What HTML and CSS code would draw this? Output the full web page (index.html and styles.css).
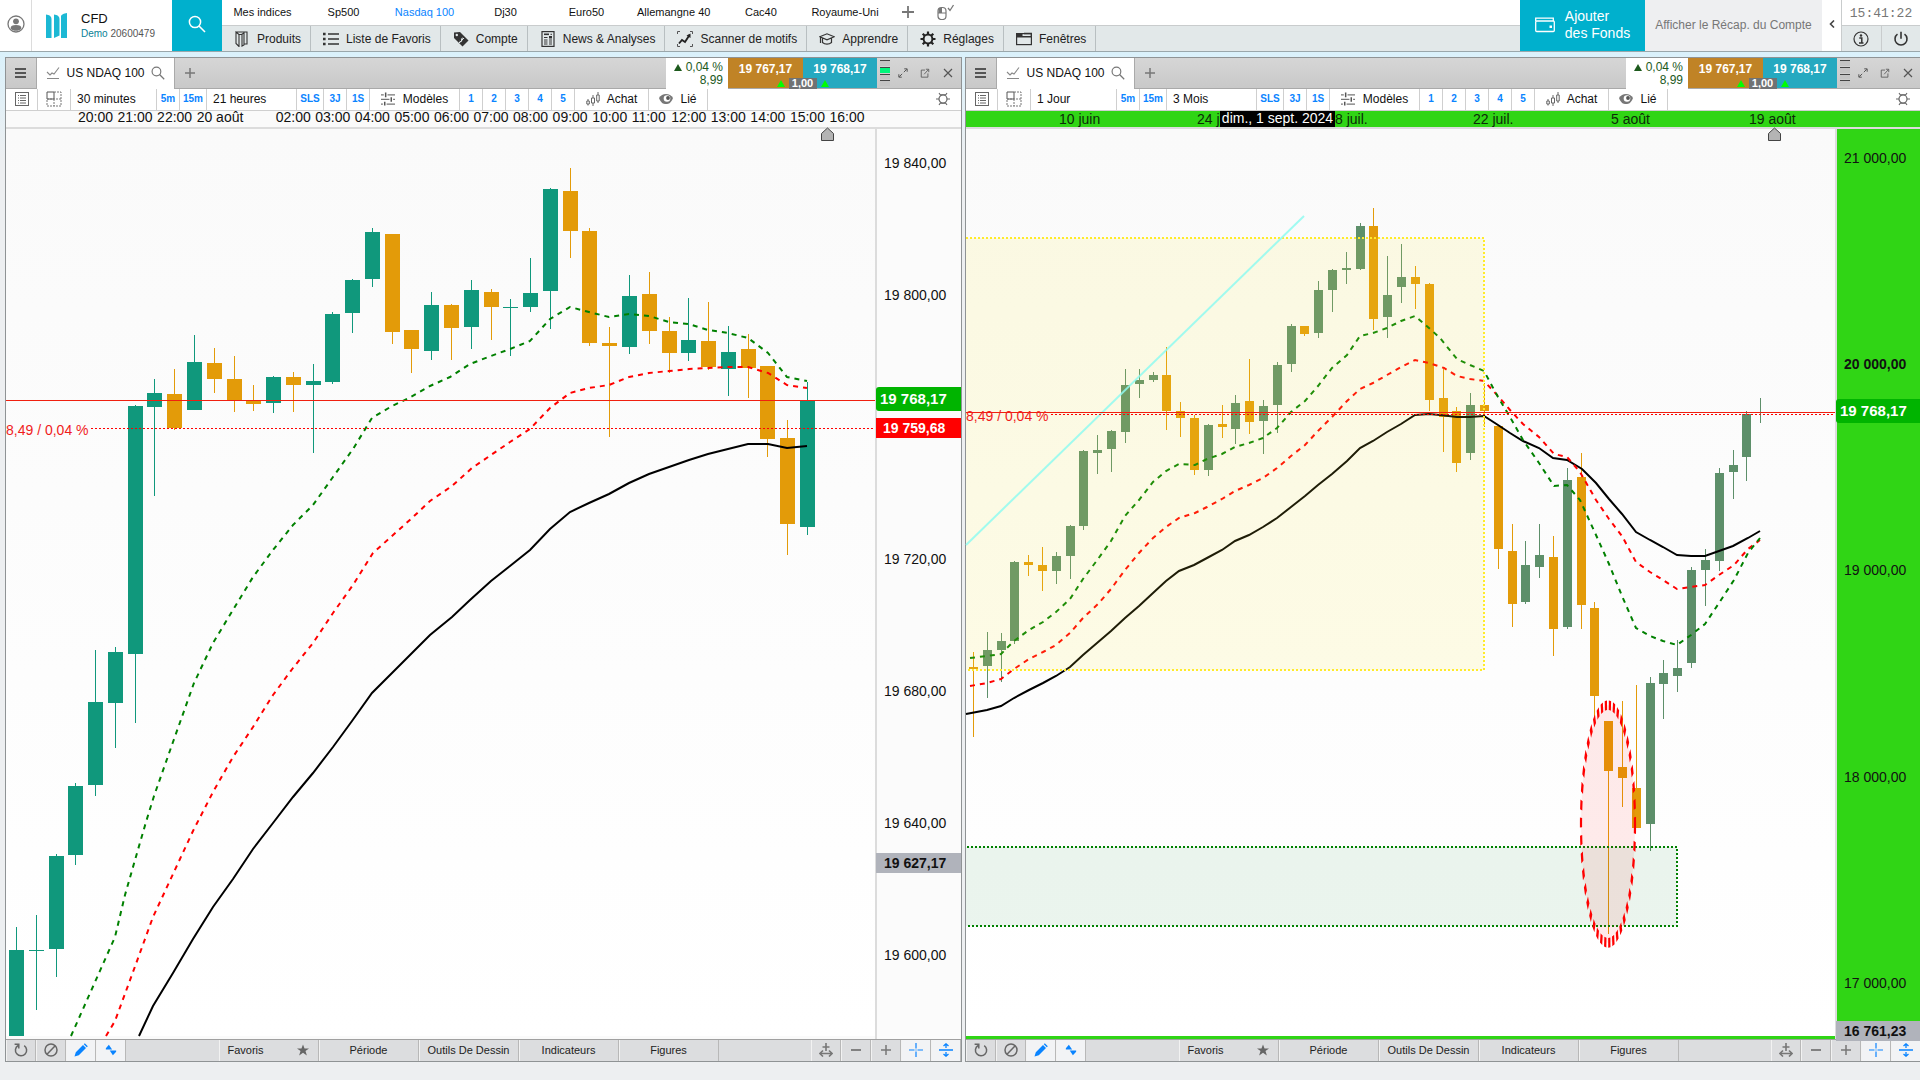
FILE: index.html
```html
<!DOCTYPE html>
<html lang="fr">
<head>
<meta charset="utf-8">
<meta name="viewport" content="width=device-width, initial-scale=1">
<title>CFD - US NDAQ 100</title>
<link rel="stylesheet" href="styles.css">
<script src="chart.js" defer></script>
</head>
<body>
<svg class="sprite" aria-hidden="true">
  <symbol id="i-user" viewBox="0 0 18 18"><circle cx="9" cy="9" r="8" fill="none" stroke="#777" stroke-width="1.3"/><circle cx="9" cy="6.3" r="2.9" fill="#777"/><path d="M3.6 13.4c0-2.4 1.8-3.4 5.4-3.4s5.4 1 5.4 3.4c-1.4 1.8-3.4 2.4-5.4 2.4s-4-.6-5.4-2.4z" fill="#777"/></symbol>
  <symbol id="i-logo" viewBox="0 0 21 25"><path d="M0 1.5C3 2 5.500 3 5.500 6v19H0zM8 1.500c3 .5 5.500 1.500 5.500 4.500v16.500L8 25zM15 3.500c0-2 3-3 6-3.500v25h-6z" fill="#1cb8d4"/></symbol>
  <symbol id="i-search" viewBox="0 0 18 18"><circle cx="7" cy="7" r="5.600" fill="none" stroke="currentColor" stroke-width="1.500"/><path d="M11 11l6 6" stroke="currentColor" stroke-width="1.600"/></symbol>
  <symbol id="i-plus" viewBox="0 0 12 12"><path d="M6 0v12M0 6h12" stroke="currentColor" stroke-width="1.800"/></symbol>
  <symbol id="i-mouse" viewBox="0 0 18 16"><rect x="1" y="3.500" width="8" height="12" rx="3.500" fill="none" stroke="#777" stroke-width="1.200"/><path d="M2 4h3v5H1.500V5z" fill="#777"/><path d="M1 9h8" stroke="#777"/><path d="M11 4l2 2.500L16.500 1" fill="none" stroke="#777" stroke-width="1.300"/></symbol>
  <symbol id="i-produits" viewBox="0 0 16 16"><path d="M2 1h11v12h-3M5 15.500V3.500L2 1v11.500l3 3zM5 3.500h2.500L10 2v12l-2 1V3.500" fill="none" stroke="#333" stroke-width="1.100"/></symbol>
  <symbol id="i-liste" viewBox="0 0 16 16"><path d="M5 3h11M5 8h11M5 13h11" stroke="#333" stroke-width="1.600"/><path d="M0 3h2.600M0 8h2.600M0 13h2.600" stroke="#333" stroke-width="2.600"/></symbol>
  <symbol id="i-compte" viewBox="0 0 16 16"><path d="M1 1.500L7 1l8.500 8.500-6 6L1 7z" fill="#333"/><circle cx="3.800" cy="4" r="1.200" fill="#e2e8e9"/><path d="M10.500 7.500c-1.200-1-2.700.2-1.900 1.500s-.8 2.500-2 1.300M11 7l-5 5" fill="none" stroke="#e2e8e9" stroke-width="1"/></symbol>
  <symbol id="i-news" viewBox="0 0 16 16"><rect x="2" y=".600" width="12" height="14.800" fill="none" stroke="#333" stroke-width="1.200"/><path d="M4 3.300h5" stroke="#333" stroke-width="1.600"/><path d="M4 6.500h3.500M4 9h3.500M4 11h3.500M4 13h3.500M9 9h3M9 11h3M9 13h3M10.500 3.300H12" stroke="#333"/><path d="M9 5h3v2.500H9z" fill="#333"/></symbol>
  <symbol id="i-scan" viewBox="0 0 16 16"><path d="M.5 3V.5H3M13 .5h2.500V3M.5 13v2.500H3M13 15.500h2.500V13" fill="none" stroke="#555"/><path d="M2 12.500l3-3.500 3 2 4.500-7" fill="none" stroke="#222" stroke-width="1.900"/><path d="M9.500 4.500L13.500 2.500v4.500z" fill="#222"/></symbol>
  <symbol id="i-cap" viewBox="0 0 16 16"><path d="M.8 5.800L8 2.800l7.200 3L8 8.800zM3.500 7.300v4.200c2.500 2.200 6.500 2.200 9 0V7.300M1.500 6.500V12" fill="none" stroke="#333" stroke-width="1.200"/></symbol>
  <symbol id="i-gear" viewBox="0 0 16 16"><circle cx="8" cy="8" r="4.400" fill="none" stroke="currentColor" stroke-width="2"/><path d="M8 .5v3M8 12.500v3M.5 8h3M12.500 8h3M2.700 2.700l2.100 2.100M11.200 11.200l2.100 2.100M2.700 13.300l2.100-2.100M11.200 4.800l2.100-2.100" stroke="currentColor" stroke-width="2.200"/></symbol>
  <symbol id="i-win" viewBox="0 0 16 16"><rect x=".6" y="2.600" width="14.800" height="11" fill="none" stroke="#333" stroke-width="1.200"/><path d="M0 2h6.500v3H16v1.500H0z" fill="#333"/><path d="M8 2.500h7.500V5" fill="none" stroke="#333" stroke-width="1.500"/></symbol>
  <symbol id="i-card" viewBox="0 0 20 16"><path d="M.7 4.500V1.700h17.600v2.800" fill="none" stroke="#fff" stroke-width="1.300"/><rect x=".7" y="4.500" width="18.600" height="10.500" rx="1" fill="none" stroke="#fff" stroke-width="1.300"/><path d="M14.500 9h2.500v2.500h-2.500z" fill="#fff"/></symbol>
  <symbol id="i-chev" viewBox="0 0 6 8"><path d="M5 .5L1.500 4 5 7.500" fill="none" stroke="#444" stroke-width="1.600"/></symbol>
  <symbol id="i-info" viewBox="0 0 16 16"><circle cx="8" cy="8" r="7" fill="none" stroke="#333" stroke-width="1.200"/><circle cx="8" cy="4.500" r="1.200" fill="#333"/><path d="M6.300 7H8.800v5M6 12h4.500" fill="none" stroke="#333" stroke-width="1.500"/></symbol>
  <symbol id="i-power" viewBox="0 0 16 16"><path d="M4.500 3.200a6 6 0 1 0 7 0M8 .8v7" fill="none" stroke="#333" stroke-width="1.600"/></symbol>
  <symbol id="i-menu" viewBox="0 0 12 12"><path d="M0 2h11M0 6h11M0 10h11" stroke="#555" stroke-width="2"/></symbol>
  <symbol id="i-line" viewBox="0 0 14 14"><path d="M1 6l3 3 2-2 2 1 5-6.500M1 12.500h12" fill="none" stroke="#888" stroke-width="1.100"/></symbol>
  <symbol id="i-expand" viewBox="0 0 12 12"><path d="M7 5l3.500-3.500M7.500 1h3.500v3.500M5 7L1.500 10.500M1 7.500V11h3.500" fill="none" stroke="#555" stroke-width="1.200"/></symbol>
  <symbol id="i-pop" viewBox="0 0 12 12"><path d="M6 2.500H1.500v8.500h8V6.500M5 7.500L10 2M7 1.500h3.500V5" fill="none" stroke="#555"/></symbol>
  <symbol id="i-close" viewBox="0 0 12 12"><path d="M2 2l8 8M10 2l-8 8" stroke="#555" stroke-width="1.200"/></symbol>
  <symbol id="i-list2" viewBox="0 0 14 14"><rect x=".5" y=".5" width="13" height="13" fill="none" stroke="#666"/><path d="M5 3.500h6M5 6h6M5 8.500h6M5 11h6M3 3.500h1M3 6h1M3 8.500h1M3 11h1" stroke="#666"/></symbol>
  <symbol id="i-grid" viewBox="0 0 16 15"><path d="M1 .5h7v7H1z" fill="none" stroke="#555"/><path d="M8 .5h7v14H1v-7h14M8 7.500v7" fill="none" stroke="#777" stroke-dasharray="2 1"/></symbol>
  <symbol id="i-sliders" viewBox="0 0 15 14"><path d="M0 2.500h15M0 7.500h15M0 12.500h15" stroke="#777" stroke-width="1.300"/><path d="M5 0v5M11 5v5M4 10v4" stroke="#fff" stroke-width="4"/><path d="M5 0v5M11 5v5M4 10v4" stroke="#555" stroke-width="1.600"/></symbol>
  <symbol id="i-candles" viewBox="0 0 14 14"><path d="M.8 9h2.500v3H.8zM5.500 6h3v5h-3zM10.700 3h2.500v6h-2.500zM7 3v3M7 11v3M12 0v3M12 9v2M2 7v2M2 12v1.500" fill="none" stroke="#666"/></symbol>
  <symbol id="i-eye" viewBox="0 0 14 12"><path d="M0 5C3-.5 11-.5 14 5c-2 5-4 6-7 6S2 10 0 5z" fill="#777"/><circle cx="8" cy="5.500" r="3.300" fill="#fff"/><circle cx="9" cy="5" r="1.900" fill="#555"/></symbol>
  <symbol id="i-cog" viewBox="0 0 14 14"><circle cx="7" cy="7" r="4" fill="none" stroke="#666" stroke-width="1.200"/><path d="M3 1l1.700 2.500M11 1L9.300 3.500M3 13l1.700-2.500M11 13l-1.700-2.500M0 7h3M11 7h3M4.500 2.800h5M4.500 11.200h5" stroke="#666" stroke-width="1.100"/></symbol>
  <symbol id="i-reload" viewBox="0 0 14 14"><path d="M10.200 2.600A5.600 5.600 0 1 1 4 2.500M.6 1.300h4.200v4.200" fill="none" stroke="#666" stroke-width="1.500"/></symbol>
  <symbol id="i-ban" viewBox="0 0 14 14"><path d="M3 11.300l8.200-8.600" stroke="#666" stroke-width="1.500"/><circle cx="7" cy="7" r="6" fill="none" stroke="#666" stroke-width="1.500"/></symbol>
  <symbol id="i-pen" viewBox="0 0 14 14"><path d="M.5 13.500l1.300-4.300L9 2l3 3-7.200 7.200zM9.800 1.200l1-1 3 3-1 1z" fill="#0a84ff"/></symbol>
  <symbol id="i-updown" viewBox="0 0 12 14"><path d="M3.500 1L7.300 6.500H0V5zM4.500 7.500H12V9l-3.800 4z" fill="#0a84ff"/></symbol>
  <symbol id="i-star" viewBox="0 0 14 13"><path d="M7 0l1.800 4.700H14L9.900 7.800 11.500 13 7 9.800 2.500 13l1.600-5.200L0 4.700h5.200z" fill="#666"/></symbol>
  <symbol id="i-hzoom" viewBox="0 0 14 14"><path d="M7 0v8M3.500 4h7M1 10.500h12" fill="none" stroke="#777" stroke-width="1.600"/><path d="M4 7.500l-3 3 3 3M10 7.500l3 3-3 3" fill="none" stroke="#777" stroke-width="1.600"/></symbol>
  <symbol id="i-minus" viewBox="0 0 10 10"><path d="M0 5h10" stroke="#777" stroke-width="1.800"/></symbol>
  <symbol id="i-cross" viewBox="0 0 14 14"><path d="M7 0v5.500M7 8.500V14M0 7h5.500M8.500 7H14M6.500 7h1" stroke="#0a84ff" stroke-width="1.200"/></symbol>
  <symbol id="i-vsplit" viewBox="0 0 14 14"><path d="M0 7h14M7 1v4M7 9v4M4.500 3L7 .8 9.500 3M4.500 11L7 13.200 9.500 11" fill="none" stroke="#0a84ff" stroke-width="1.300"/></symbol>
</svg>

<header class="top">
  <button class="user" aria-label="Profil"><svg class="s18"><use href="#i-user"/></svg></button>
  <div class="brand">
    <svg class="logo"><use href="#i-logo"/></svg>
    <div><div class="brand-name">CFD</div><div class="brand-id"><b>Demo</b> 20600479</div></div>
  </div>
  <button class="find" aria-label="Rechercher"><svg class="s18"><use href="#i-search"/></svg></button>
  <div class="navs">
    <nav class="markets">
      <button>Mes indices</button><button>Sp500</button><button class="on">Nasdaq 100</button><button>Dj30</button><button>Euro50</button><button>Allemangne 40</button><button>Cac40</button><button>Royaume-Uni</button>
      <button class="tool" aria-label="Ajouter"><svg class="s12"><use href="#i-plus"/></svg></button>
      <button class="tool" aria-label="Souris"><svg class="mouse"><use href="#i-mouse"/></svg></button>
    </nav>
    <nav class="menu">
      <button><svg class="s16"><use href="#i-produits"/></svg>Produits</button>
      <button><svg class="s16"><use href="#i-liste"/></svg>Liste de Favoris</button>
      <button><svg class="s16"><use href="#i-compte"/></svg>Compte</button>
      <button><svg class="s16"><use href="#i-news"/></svg>News &amp; Analyses</button>
      <button><svg class="s16"><use href="#i-scan"/></svg>Scanner de motifs</button>
      <button><svg class="s16"><use href="#i-cap"/></svg>Apprendre</button>
      <button><svg class="s16"><use href="#i-gear"/></svg>Réglages</button>
      <button><svg class="s16"><use href="#i-win"/></svg>Fenêtres</button>
    </nav>
  </div>
  <button class="funds"><svg class="card"><use href="#i-card"/></svg><span>Ajouter<br>des Fonds</span></button>
  <button class="recap">Afficher le Récap. du Compte</button>
  <button class="chev" aria-label="Réduire"><svg class="chev-i"><use href="#i-chev"/></svg></button>
  <div class="status">
    <time class="clock">15:41:22</time>
    <div class="status-row">
      <button aria-label="Info"><svg class="s16"><use href="#i-info"/></svg></button>
      <button aria-label="Quitter"><svg class="s16"><use href="#i-power"/></svg></button>
    </div>
  </div>
</header>

<main class="desk">
  <section class="panel">
    <div class="tabbar">
      <button class="burger" aria-label="Menu"><svg class="s12"><use href="#i-menu"/></svg></button>
      <button class="tab"><svg class="s14"><use href="#i-line"/></svg>US NDAQ 100<svg class="s14 grey"><use href="#i-search"/></svg></button>
      <button class="add" aria-label="Nouvel onglet"><svg class="s10"><use href="#i-plus"/></svg></button>
      <div class="change"><span><i class="tri"></i>0,04 %</span><span>8,99</span></div>
      <div class="quote">
        <button class="sell">19 767,17</button><button class="buy">19 768,17</button>
        <div class="spread"><i class="up"></i><b>1,00</b><i class="up"></i></div>
      </div>
      <div class="gauge"><i></i><i class="lit"></i><i></i><i></i></div>
      <div class="winctl">
        <button aria-label="Agrandir"><svg class="s10"><use href="#i-expand"/></svg></button>
        <button aria-label="Détacher"><svg class="s10"><use href="#i-pop"/></svg></button>
        <button aria-label="Fermer"><svg class="s12"><use href="#i-close"/></svg></button>
      </div>
    </div>
    <div class="tools">
      <button class="w-ic" aria-label="Liste"><svg class="s14"><use href="#i-list2"/></svg></button>
      <button class="w-grid" aria-label="Grille"><svg class="s16"><use href="#i-grid"/></svg></button>
      <button class="w-per">30 minutes</button>
      <button class="q">5m</button><button class="q q-l">15m</button>
      <button class="w-span">21 heures</button>
      <button class="q q-l">SLS</button><button class="q">3J</button><button class="q">1S</button>
      <button class="w-mod"><svg class="s14"><use href="#i-sliders"/></svg>Modèles</button>
      <button class="q">1</button><button class="q">2</button><button class="q">3</button><button class="q">4</button><button class="q">5</button>
      <button class="w-buy"><svg class="s14"><use href="#i-candles"/></svg>Achat</button>
      <button class="w-link"><svg class="eye"><use href="#i-eye"/></svg>Lié</button>
      <button class="w-cog" aria-label="Options"><svg class="s14"><use href="#i-cog"/></svg></button>
    </div>
    <div class="times hours">
      <span>20:00</span><span>21:00</span><span>22:00</span><span class="day">20 août</span><span>02:00</span><span>03:00</span><span>04:00</span><span>05:00</span><span>06:00</span><span>07:00</span><span>08:00</span><span>09:00</span><span>10:00</span><span>11:00</span><span>12:00</span><span>13:00</span><span>14:00</span><span>15:00</span><span>16:00</span>
    </div>
    <div class="chart">
      <svg class="plot" id="plot-30m" viewBox="6 129 869 907" preserveAspectRatio="none"></svg>
      <div class="axis" id="axis-30m"></div>
      <span class="gap" id="gap-30m">8,49 / 0,04 %</span>
    </div>
    <div class="foot">
      <button class="f-ic" aria-label="Recharger"><svg class="s14"><use href="#i-reload"/></svg></button>
      <button class="f-ic" aria-label="Effacer"><svg class="s14"><use href="#i-ban"/></svg></button>
      <button class="f-ic lit" aria-label="Dessiner"><svg class="s14"><use href="#i-pen"/></svg></button>
      <button class="f-ic lit" aria-label="Ordres"><svg class="s12"><use href="#i-updown"/></svg></button>
      <span class="fill"></span>
      <button class="f-tx fav">Favoris<svg class="s12"><use href="#i-star"/></svg></button>
      <button class="f-tx">Période</button><button class="f-tx">Outils De Dessin</button><button class="f-tx">Indicateurs</button><button class="f-tx">Figures</button>
      <span class="fill"></span>
      <button class="f-ic" aria-label="Ajuster"><svg class="s14"><use href="#i-hzoom"/></svg></button>
      <button class="f-ic" aria-label="Dézoomer"><svg class="s10"><use href="#i-minus"/></svg></button>
      <button class="f-ic grey" aria-label="Zoomer"><svg class="s10"><use href="#i-plus"/></svg></button>
      <button class="f-ic lit" aria-label="Réticule"><svg class="s14"><use href="#i-cross"/></svg></button>
      <button class="f-ic lit" aria-label="Échelle"><svg class="s14"><use href="#i-vsplit"/></svg></button>
    </div>
  </section>

  <section class="panel daily">
    <div class="tabbar">
      <button class="burger" aria-label="Menu"><svg class="s12"><use href="#i-menu"/></svg></button>
      <button class="tab"><svg class="s14"><use href="#i-line"/></svg>US NDAQ 100<svg class="s14 grey"><use href="#i-search"/></svg></button>
      <button class="add" aria-label="Nouvel onglet"><svg class="s10"><use href="#i-plus"/></svg></button>
      <div class="change"><span><i class="tri"></i>0,04 %</span><span>8,99</span></div>
      <div class="quote">
        <button class="sell">19 767,17</button><button class="buy">19 768,17</button>
        <div class="spread"><i class="up"></i><b>1,00</b><i class="up"></i></div>
      </div>
      <div class="gauge"><i></i><i></i><i></i><i></i></div>
      <div class="winctl">
        <button aria-label="Agrandir"><svg class="s10"><use href="#i-expand"/></svg></button>
        <button aria-label="Détacher"><svg class="s10"><use href="#i-pop"/></svg></button>
        <button aria-label="Fermer"><svg class="s12"><use href="#i-close"/></svg></button>
      </div>
    </div>
    <div class="tools">
      <button class="w-ic" aria-label="Liste"><svg class="s14"><use href="#i-list2"/></svg></button>
      <button class="w-grid" aria-label="Grille"><svg class="s16"><use href="#i-grid"/></svg></button>
      <button class="w-per">1 Jour</button>
      <button class="q">5m</button><button class="q q-l">15m</button>
      <button class="w-span">3 Mois</button>
      <button class="q q-l">SLS</button><button class="q">3J</button><button class="q">1S</button>
      <button class="w-mod"><svg class="s14"><use href="#i-sliders"/></svg>Modèles</button>
      <button class="q">1</button><button class="q">2</button><button class="q">3</button><button class="q">4</button><button class="q">5</button>
      <button class="w-buy"><svg class="s14"><use href="#i-candles"/></svg>Achat</button>
      <button class="w-link"><svg class="eye"><use href="#i-eye"/></svg>Lié</button>
      <button class="w-cog" aria-label="Options"><svg class="s14"><use href="#i-cog"/></svg></button>
    </div>
    <div class="times days">
      <span>10 juin</span><span>24 j</span><span>8 juil.</span><span>22 juil.</span><span>5 août</span><span>19 août</span>
      <b class="cursor-date">dim., 1 sept. 2024</b>
    </div>
    <div class="chart">
      <svg class="plot" id="plot-day" viewBox="6 129 869 907" preserveAspectRatio="none"></svg>
      <div class="axis" id="axis-day"></div>
      <span class="gap" id="gap-day">8,49 / 0,04 %</span>
    </div>
    <div class="foot">
      <button class="f-ic" aria-label="Recharger"><svg class="s14"><use href="#i-reload"/></svg></button>
      <button class="f-ic" aria-label="Effacer"><svg class="s14"><use href="#i-ban"/></svg></button>
      <button class="f-ic lit" aria-label="Dessiner"><svg class="s14"><use href="#i-pen"/></svg></button>
      <button class="f-ic lit" aria-label="Ordres"><svg class="s12"><use href="#i-updown"/></svg></button>
      <span class="fill"></span>
      <button class="f-tx fav">Favoris<svg class="s12"><use href="#i-star"/></svg></button>
      <button class="f-tx">Période</button><button class="f-tx">Outils De Dessin</button><button class="f-tx">Indicateurs</button><button class="f-tx">Figures</button>
      <span class="fill"></span>
      <button class="f-ic" aria-label="Ajuster"><svg class="s14"><use href="#i-hzoom"/></svg></button>
      <button class="f-ic" aria-label="Dézoomer"><svg class="s10"><use href="#i-minus"/></svg></button>
      <button class="f-ic grey" aria-label="Zoomer"><svg class="s10"><use href="#i-plus"/></svg></button>
      <button class="f-ic lit" aria-label="Réticule"><svg class="s14"><use href="#i-cross"/></svg></button>
      <button class="f-ic lit" aria-label="Échelle"><svg class="s14"><use href="#i-vsplit"/></svg></button>
    </div>
  </section>
</main>
</body>
</html>
```

FILE: styles.css
```css
* { box-sizing: border-box; }
body {
  margin: 0;
  height: 100vh;
  display: flex;
  flex-direction: column;
  overflow: hidden;
  background: linear-gradient(#daf1fb 52px, #edeff1 160px);
  font-family: "Liberation Sans", Arial, sans-serif;
  font-size: 12px;
  color: #111;
}
button {
  margin: 0;
  padding: 0;
  border: 0;
  background: none;
  font: inherit;
  color: inherit;
  white-space: nowrap;
  display: flex;
  align-items: center;
  justify-content: center;
}
svg { display: block; flex: none; }
.sprite { position: absolute; width: 0; height: 0; }
.s10 { width: 10px; height: 10px; }
.s12 { width: 12px; height: 12px; }
.s14 { width: 14px; height: 14px; }
.s16 { width: 16px; height: 16px; }
.s18 { width: 18px; height: 18px; }
.grey { color: #777; }

/* header */
.top { flex: none; display: flex; height: 52px; background: #fff; border-bottom: 1px solid #9aa7ab; }
.user { width: 32px; padding-bottom: 3px; border-right: 1px solid #dcdcdc; }
.brand { width: 140px; display: flex; align-items: center; gap: 14px; padding-left: 14px; }
.logo { width: 21px; height: 25px; }
.brand-name { font-size: 13px; line-height: 16px; }
.brand-id { font-size: 10px; line-height: 14px; color: #555; }
.brand-id b { font-weight: normal; color: #0a7f96; }
.find { width: 50px; background: #00b0cd; color: #fff; padding-bottom: 4px; }
.navs { flex: 1; min-width: 0; display: flex; flex-direction: column; }
.markets { display: flex; height: 26px; border-bottom: 1px solid #c9cccd; font-size: 11px; }
.markets button { min-width: 81px; padding: 0 10px 2px; }
.markets .on { color: #0a84ff; }
.markets .tool { min-width: 38px; color: #777; }
.mouse { width: 18px; height: 16px; }
.menu { flex: 1; display: flex; background: #e2e8e9; color: #222; }
.menu button { gap: 7px; padding: 0 9px 0 12px; border-right: 1px solid #b8bfc1; }
.funds { width: 125px; padding-bottom: 2px; background: #00b0cd; color: #fff; font-size: 14px; line-height: 17px; text-align: left; gap: 10px; }
.card { width: 20px; height: 17px; }
.recap { width: 177px; padding-bottom: 2px; background: #eeeff1; color: #777; }
.chev { width: 19px; padding-bottom: 4px; }
.chev-i { width: 6px; height: 8px; }
.status { width: 79px; border-left: 1px solid #c9cccd; display: flex; flex-direction: column; }
.clock { height: 26px; line-height: 27px; text-align: center; border-bottom: 1px solid #c9cccd; font-family: "Liberation Mono", monospace; font-size: 13px; color: #777; }
.status-row { flex: 1; display: flex; background: #e2e8e9; }
.status-row button { flex: 1; }
.status-row button + button { border-left: 1px solid #c9cccd; }

/* panels; the right one runs slightly past the window edge */
.desk {
  flex: 1;
  min-height: 0;
  display: grid;
  grid-template-columns: 1fr 1fr;
  gap: 3px;
  padding: 5px 0 18px 5px;
  margin-right: -2px;
}
.panel { min-width: 0; min-height: 0; display: flex; flex-direction: column; border: 1px solid #8f9395; background: #fff; }
.tabbar { flex: none; display: flex; height: 31px; background: linear-gradient(#d6d6d6, #c8c8c8); }
.tabbar > * { border-bottom: 1px solid #a9a9a9; }
.burger { width: 31px; border-right: 1px solid #aaa; }
.tabbar .tab { width: 137px; gap: 6px; background: #fff; border-bottom-color: #fff; }
.add { flex: 1; justify-content: flex-start; padding-left: 10px; border-left: 1px solid #aaa; color: #777; }
.change { width: 62px; padding: 3px 5px 0 0; background: #fff; color: #1d5a1d; display: flex; flex-direction: column; align-items: flex-end; line-height: 13px; }
.tabbar .change { border-bottom-color: #fff; }
.change span { display: flex; align-items: center; gap: 4px; }
.tri, .up { border: solid transparent; border-width: 0 4px 7px; border-bottom-color: #1d5a1d; }
.up { border-bottom-color: #0f0; }
.quote { position: relative; display: grid; grid-template-columns: 75px 74px; color: #fff; font-weight: bold; }
.quote button { padding-bottom: 8px; }
.sell { background: #c08326; }
.buy { background: #25a9c0; }
.spread { position: absolute; left: 0; right: 0; bottom: -1px; display: flex; justify-content: center; align-items: center; gap: 4px; }
.spread b { width: 28px; height: 11px; background: #6f7274; font-size: 11px; line-height: 11px; text-align: center; }
.gauge { width: 14px; padding: 2px 1px 2px 3px; display: flex; flex-direction: column; gap: 1px; }
.gauge i { flex: 1; border-top: 1px solid #444; background: #c4c4c4; }
.gauge .lit { background: #00f57a; }
.winctl { width: 70px; display: flex; align-items: center; gap: 12px; padding-left: 7px; }

.tools { flex: none; display: flex; height: 22px; border-bottom: 1px solid #cfcfcf; background: #fff; }
.tools button { padding-bottom: 2px; border-right: 1px solid #cfcfcf; }
.w-ic { width: 32px; }
.w-grid { width: 33px; }
.tools .w-per, .tools .w-span { justify-content: flex-start; padding-left: 6px; }
.w-per { width: 86px; }
.w-span { width: 90px; }
.q { width: 23px; font-size: 10px; font-weight: bold; color: #0a84ff; }
.q-l { width: 27px; }
.w-mod { width: 90px; gap: 8px; }
.w-buy { width: 74px; gap: 7px; }
.w-link { width: 59px; gap: 7px; }
.eye { width: 14px; height: 12px; }
.tools .w-cog { margin-left: auto; width: 36px; border-right: 0; }

.times { flex: none; display: grid; height: 18px; border-bottom: 2px solid #dcdcdc; background: #fafafa; font-size: 14px; line-height: 13px; white-space: nowrap; }
.hours { grid-template-columns: repeat(20, 1fr); padding: 0 92px 0 72px; }
.hours .day { grid-column: span 2; }
.days { position: relative; grid-template-columns: repeat(6, 1fr); padding: 0 34px 0 93px; background: #30d515; line-height: 17px; color: #0c2a08; }
.cursor-date { position: absolute; left: 254px; top: 0; width: 115px; height: 16px; line-height: 15px; font-weight: normal; background: #000; color: #fff; text-align: center; }

.chart { position: relative; flex: 1; min-height: 0; display: grid; grid-template-columns: minmax(0, 1fr) 86px; grid-template-rows: minmax(0, 1fr); background: linear-gradient(#fafafa, #fff); }
.plot { width: 100%; height: 100%; min-height: 0; overflow: visible; border-bottom: 3px solid #fafafa; }
.daily .plot { border-bottom-color: #30d515; }
.axis { position: relative; border-left: 2px solid #dcdcdc; background: #fbfbfb; font-size: 14px; }
.daily .axis { background: #30d515; }
.axis span { position: absolute; left: -1px; right: 0; padding-left: 8px; line-height: 20px; margin-top: -10px; }
.axis .strong { font-weight: bold; }
.axis .last { padding-left: 4px; margin-top: -12px; border-radius: 3px 0 0 3px; background: #00b400; color: #fff; font-size: 15px; font-weight: bold; line-height: 24px; }
.axis .close { padding-left: 7px; background: #f00; color: #fff; font-weight: bold; }
.axis .cursor { background: #b0b3bb; font-weight: bold; }
.gap { position: absolute; left: 0; margin-top: -8px; font-size: 14px; line-height: 16px; color: #f01c1c; }

.foot { flex: none; display: flex; height: 22px; border-top: 1px solid #a0a0a0; background: #dcdddf; font-size: 11px; color: #222; }
.foot button { padding-bottom: 1px; border-right: 1px solid #b8b8b8; border-left: 1px solid #f2f2f2; }
.f-ic { width: 30px; }
.foot .lit { background: #f2f3f5; }
.f-tx { width: 100px; }
.foot .fav { justify-content: space-between; padding: 0 9px 1px 8px; }
.fill { flex: 1; }
```

FILE: chart.js
```js
// Each candle: [left, high, bodyTop, bodyBottom, low, rising]
const charts = {
  '30m': {
    width: 15, up: '#10987c', down: '#e39b09', wick: 7,
    candles: [
      [9,927,950,1036,1036,1],[29,915,950,951,1010,1],[49,854,856,949,977,1],[68,783,786,855,865,1],[88,650,702,785,796,1],
      [108,647,652,703,748,1],[128,405,406,654,723,1],[147,379,393,407,496,1],[167,369,394,428,430,0],[187,335,362,410,410,1],
      [207,348,363,379,393,0],[227,356,379,400,412,0],[246,385,401,404,411,0],[266,376,377,403,413,1],[286,372,377,385,412,0],
      [306,364,381,385,453,1],[325,312,314,382,384,1],[345,279,280,313,333,1],[365,228,232,279,287,1],[385,234,234,332,344,0],
      [404,330,330,349,373,0],[424,292,305,351,360,1],[444,304,305,328,360,0],[464,280,290,327,349,1],[484,289,292,307,340,0],
      [503,299,307,308,356,1],[523,258,293,307,312,1],[543,188,189,291,329,1],[563,168,191,231,258,0],[582,228,231,343,346,0],
      [602,327,343,346,437,0],[622,275,296,347,354,1],[642,272,294,331,344,0],[662,317,331,353,373,0],[681,298,340,353,361,1],
      [701,302,341,367,370,0],[721,326,352,369,396,1],[741,334,349,368,398,0],[760,366,366,439,457,0],[780,420,438,524,555,0],[800,382,401,527,535,1]
    ],
    green: '71,1036 95,982 115,937 125,895 135,860 146,822 154,796 173,742 194,683 213,643 239,600 253,577 273,550 293,525 313,505 333,477 353,449 372,418 392,406 409,398 430,386 450,377 470,364 491,356 510,349 530,341 550,319 570,307 589,312 609,317 629,314 649,316 669,322 689,324 708,330 728,333 748,338 768,353 787,377 807,381',
    red: '106,1036 115,1021 133,972 153,917 173,874 193,831 213,792 233,757 253,727 273,695 293,668 313,643 333,613 353,585 373,553 392,536 412,518 430,501 452,486 472,468 491,455 510,442 530,429 550,408 570,393 589,388 609,385 629,377 649,373 669,371 689,369 708,368 728,367 748,367 768,373 787,385 807,388',
    black: '139,1036 153,1006 173,973 193,939 213,907 233,879 253,849 273,823 293,797 313,773 333,747 352,721 372,693 392,673 412,653 430,635 452,617 470,600 491,581 510,566 530,550 550,529 570,512 589,503 609,494 629,483 649,474 669,467 689,460 708,454 728,449 748,444 768,444 787,448 807,446',
    last: 400, close: 428, gap: 430, marker: 827.5,
    labels: [[163,'19 840,00'],[295,'19 800,00'],[559,'19 720,00'],[691,'19 680,00'],[823,'19 640,00'],[955,'19 600,00'],
      [428,'19 759,68','close'],[399,'19 768,17','last'],[863,'19 627,17','cursor']]
  },
  day: {
    width: 9, up: '#5d8f6a', down: '#e39b09', wick: 4,
    candles: [
      [9,652,667,669,737,0],[23,632,650,666,698,1],[37,633,641,650,682,1],[50,561,562,641,644,1],[64,555,562,565,576,0],
      [78,547,565,571,591,0],[92,552,556,571,584,1],[106,525,526,556,579,1],[119,450,451,526,530,1],[133,435,450,453,474,1],
      [147,430,431,449,472,1],[161,369,385,432,443,1],[175,369,380,384,398,1],[189,372,375,380,382,1],[202,347,375,411,430,0],
      [216,402,411,418,437,0],[230,415,418,470,475,0],[244,424,425,470,476,1],[258,405,424,427,438,0],[271,395,403,429,444,1],
      [285,359,401,422,434,0],[299,400,406,421,454,1],[313,362,365,405,433,1],[327,324,326,364,372,1],[340,326,326,334,336,0],
      [354,281,290,333,338,1],[368,269,270,290,312,1],[382,252,268,270,284,1],[396,223,226,269,270,1],[409,208,226,319,330,0],
      [423,256,295,317,338,1],[437,244,277,287,303,1],[451,266,277,284,309,0],[465,283,284,400,411,0],[479,369,398,417,452,0],
      [492,407,411,463,472,0],[506,393,405,453,460,1],[520,383,405,411,427,0],[534,426,426,549,569,0],[548,524,551,604,627,0],
      [561,541,565,602,604,1],[575,524,555,567,578,1],[589,536,557,629,656,0],[603,468,480,627,629,1],[617,453,477,605,629,0],
      [630,602,608,696,721,0],[644,721,721,771,934,0],[658,701,767,778,807,0],[672,685,788,828,828,0],[686,677,683,824,851,1],
      [699,660,673,684,719,1],[713,640,668,676,692,1],[727,567,570,663,668,1],[741,549,560,570,606,1],[755,468,473,561,571,1],
      [769,450,465,472,499,1],[782,411,414,457,481,1],[796,398,398,398,423,1]
    ],
    green: '10,658 27,656 41,654 54,641 69,630 83,622 96,612 110,599 123,579 138,559 151,541 165,516 179,500 193,482 206,471 219,464 235,465 247,459 262,454 275,447 289,443 303,438 317,428 331,412 345,401 358,386 372,368 387,355 400,336 413,333 427,328 441,321 455,316 469,328 480,338 497,359 510,365 524,371 538,397 550,417 563,440 579,463 594,486 607,485 620,500 636,535 649,564 662,596 676,628 690,636 703,641 717,645 731,635 745,624 759,603 774,580 788,553 800,538',
    red: '10,686 27,683 41,679 54,669 69,659 83,652 96,645 110,633 123,618 138,604 151,589 165,570 179,553 193,538 206,527 219,518 235,513 247,507 262,499 275,491 289,485 303,478 317,468 331,456 345,445 358,431 372,417 387,401 400,389 413,383 427,375 441,367 455,360 469,363 484,368 497,376 510,379 524,381 538,396 550,410 563,424 579,437 594,454 607,457 620,472 636,500 649,519 662,536 676,562 690,572 703,580 717,589 731,587 745,585 759,575 774,565 788,549 800,540',
    black: '6,714 27,710 41,706 54,698 69,690 83,683 96,676 110,667 123,655 137,643 151,631 165,618 179,606 193,593 206,581 219,571 234,565 247,558 262,550 275,541 289,535 303,527 317,518 331,507 345,496 358,485 372,474 387,461 400,448 413,441 427,432 441,424 455,415 469,414 480,415 497,417 510,417 524,416 538,425 550,433 563,441 579,448 593,458 607,460 622,469 636,483 649,499 662,514 676,532 690,540 703,547 717,555 731,556 745,556 759,551 773,546 788,538 800,531',
    last: 412, close: 414, gap: 416, marker: 814.5,
    labels: [[158,'21 000,00'],[364,'20 000,00','strong'],[570,'19 000,00'],[777,'18 000,00'],[983,'17 000,00'],
      [411,'19 768,17','last'],[1031,'16 761,23','cursor']],
    shapes: `<g shape-rendering="crispEdges">
      <rect x="6" y="238" width="518" height="432" fill="#ffeb3b" fill-opacity=".12"/>
      <path d="M6 238H524V670H6" fill="none" stroke="#ffeb2a" stroke-width="2" stroke-dasharray="2 2"/>
      <rect x="6" y="847" width="711" height="79" fill="#008020" fill-opacity=".08"/>
      <path d="M7 847H717V926H7" fill="none" stroke="#008000" stroke-width="2" stroke-dasharray="2 2"/></g>
      <path d="M6 545L344 216" stroke="#8ffaf0" stroke-opacity=".85" stroke-width="2"/>
      <circle r="27" transform="translate(648 824) scale(1 4.4)" fill="#f00" fill-opacity=".08" stroke="#f00" stroke-width="2.2" stroke-dasharray="2.2 1.8"/>`
  }
};

const TOP = 129, AXIS_HEIGHT = 910;
const percent = y => ((y - TOP) / AXIS_HEIGHT * 100) + '%';

for (const [id, c] of Object.entries(charts)) {
  const bars = c.candles.map(([x, hi, top, bottom, lo, rising]) =>
    `<path fill="${rising ? c.up : c.down}" d="M${x} ${top}h${c.width}v${bottom - top}h-${c.width}zM${x + c.wick} ${hi}h1v${lo - hi}h-1z"/>`).join('');
  const line = (points, color, dash) =>
    `<polyline points="${points}" fill="none" stroke="${color}" stroke-width="2" stroke-dasharray="${dash}"/>`;
  document.getElementById('plot-' + id).innerHTML =
    `<g shape-rendering="crispEdges">${bars}</g>` +
    line(c.black, '#000', 'none') + line(c.red, '#f00', '5 5') + line(c.green, '#008000', '5 5') +
    (c.shapes || '') +
    `<path d="M6 ${c.last + 0.5}H875" stroke="#f0200f" shape-rendering="crispEdges"/>
     <path d="M91 ${c.close + 0.5}H875" stroke="#f00" stroke-dasharray="2 2" shape-rendering="crispEdges"/>
     <path d="M${c.marker - 6} 140.500v-7l6-5.500 6 5.500v7z" fill="#b4b4b4" stroke="#444"/>`;
  document.getElementById('gap-' + id).style.top = percent(c.gap);
  const axis = document.getElementById('axis-' + id);
  for (const [y, text, kind] of c.labels) {
    const el = document.createElement('span');
    el.textContent = text;
    if (kind) el.className = kind;
    el.style.top = percent(y);
    axis.append(el);
  }
}
```
